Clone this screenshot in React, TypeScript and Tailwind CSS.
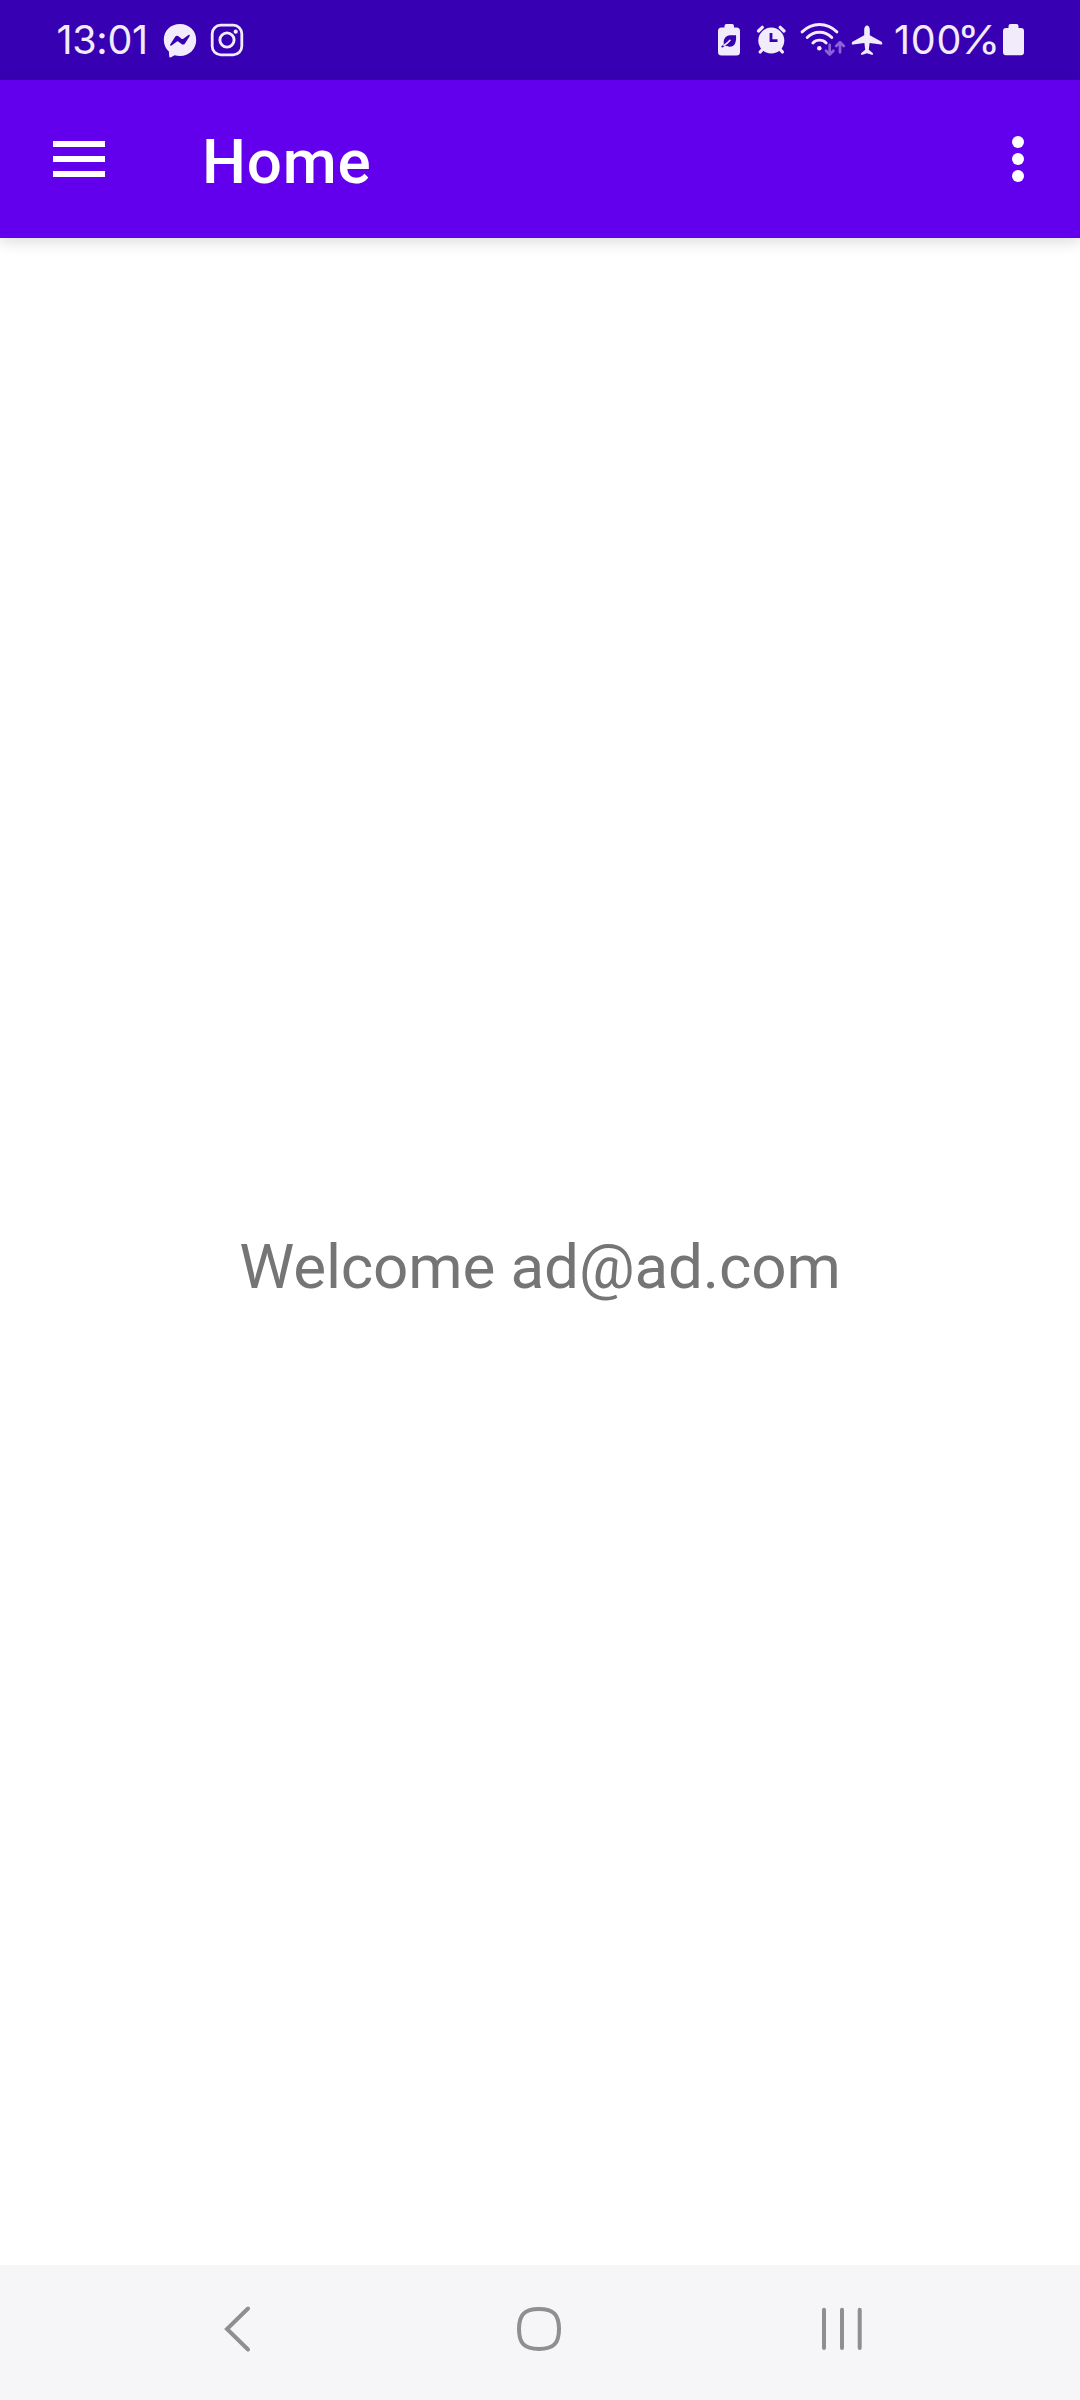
const INK = "#f1ebfc";

function MessengerIcon() {
  return (
    <svg className="h-[36px] w-[34px]" viewBox="0 0 34 36" fill="none">
      <path
        d="M17 1C7.600 1 .8 7.700 .8 16.700C.8 21.500 2.700 25.800 5.900 28.600L6.200 33.400C6.300 34.300 7.200 34.700 8 34.300L11.600 32.200C13.300 32.700 15.100 32.900 17 32.900C26.300 32.900 33.200 26 33.200 16.900C33.200 7.800 26.300 1 17 1Z"
        fill={INK}
      />
      <path
        d="M7.200 21.600L12 13.900Q13.500 11.900 15.500 13.300L18.800 15.900Q19.400 16.300 20 15.900L25.400 12.100Q27.300 11.200 26.600 13.200L22 20.400Q20.500 22.400 18.500 21L15.200 18.500Q14.600 18.100 14 18.500L8.500 22.400Q6.700 23.200 7.200 21.600Z"
        fill="#3700b3"
      />
    </svg>
  );
}

function InstagramIcon() {
  return (
    <svg className="h-[34px] w-[34px]" viewBox="0 0 34 34" fill="none" stroke={INK}>
      <rect x="2.200" y="2.200" width="29.600" height="29.600" rx="8.500" strokeWidth="2.800" />
      <circle cx="17" cy="17" r="7.100" strokeWidth="2.900" />
      <circle cx="25.700" cy="8.700" r="2.100" fill={INK} stroke="none" />
    </svg>
  );
}

function LeafBatteryIcon() {
  return (
    <svg className="h-8 w-[22px]" viewBox="0 0 22 32" fill="none">
      <path
        d="M8.500 0H14Q16 0 16 2V3.500H18.500Q22 3.500 22 7V28Q22 31.500 18.500 31.500H3.500Q0 31.500 0 28V7Q0 3.500 3.500 3.500H6.500V2Q6.500 0 8.500 0Z"
        fill={INK}
      />
      <path
        d="M18 11.300C18.600 18 17 22.800 11.500 22.800C10 22.800 8.500 22.400 7.600 21.600L4 23.800L3.200 22.400L5.900 20.300C5 15 8 11.300 12 11.300Z"
        fill="#3700b3"
      />
      <path d="M6 21.400Q9.500 19.300 12 16.300" stroke={INK} strokeWidth="1.600" strokeLinecap="round" />
    </svg>
  );
}

function AlarmIcon() {
  return (
    <svg className="h-[30px] w-[30px]" viewBox="0 0 30 30" fill="none" stroke={INK} strokeLinecap="round">
      <circle cx="15.300" cy="15.600" r="13" fill={INK} stroke="none" />
      <path d="M2.500 6L6.300 2.300M24.200 2.300L28 6" strokeWidth="3.200" />
      <path d="M6.800 24L4.200 27M23.800 24L26.400 27" strokeWidth="3.200" />
      <path d="M15 8V15.600H21.500" stroke="#3700b3" strokeWidth="2.800" strokeLinecap="butt" />
    </svg>
  );
}

function WifiIcon() {
  return (
    <svg className="h-[34px] w-[46px]" viewBox="0 0 46 34" fill="none" strokeLinecap="round">
      <g stroke={INK} strokeWidth="2.900">
        <path d="M2.100 8.900Q9.800 1.500 19.500 1.500T36.900 8.900" />
        <path d="M7.200 14.500Q12.300 9.300 19.500 9.300T31.800 14.500" />
        <path d="M12.900 19.900Q15.500 17.100 19.500 17.100T26.200 19.900" />
      </g>
      <circle cx="19.300" cy="25.300" r="2.300" fill={INK} />
      <g stroke="#8b63d8" strokeWidth="2.700" strokeLinejoin="round">
        <path d="M29.700 21.800V31M26 27.800L29.700 31.600L33.400 27.800" />
        <path d="M40 29.300V19.800M36.200 23L40 19.200L43.800 23" />
      </g>
    </svg>
  );
}

function AirplaneIcon() {
  return (
    <svg className="h-[31px] w-8" viewBox="0 0 32 31" fill={INK}>
      <path d="M16 .5C14.400 .5 13.300 2.200 13.200 4.500V10.300L1.900 16.500Q.7 17.200 .7 18.400Q.7 19.700 2 19.600L13.400 18L14.200 24.800L10.300 27.900Q9.500 28.900 10 29.500Q10.400 29.900 11.400 29.700L16 28.300L20.600 29.700Q21.600 29.900 22 29.500Q22.500 28.900 21.700 27.900L17.800 24.800L18.600 18L30 19.600Q31.300 19.700 31.300 18.400Q31.300 17.200 30.100 16.500L18.800 10.300V4.500C18.700 2.200 17.600 .5 16 .5Z" />
    </svg>
  );
}

function BatteryIcon() {
  return (
    <svg className="h-8 w-[22px]" viewBox="0 0 22 32" fill={INK}>
      <path d="M7.500 0H13.500Q15.500 0 15.500 2V4H18Q21 4 21 7V28.300Q21 31.300 18 31.300H3Q0 31.300 0 28.300V7Q0 4 3 4H5.500V2Q5.500 0 7.500 0Z" />
    </svg>
  );
}

function StatusBar() {
  return (
    <header className="flex h-20 justify-between bg-[#3700b3] pr-[55px] pl-[56px] font-['Inter','Roboto',sans-serif] text-[39.500px] leading-[80px] text-[#f1ebfc]">
      <div className="flex items-start">
        <span className="w-[107px] pl-[0.500px] tracking-[-0.300px] whitespace-nowrap">13:01</span>
        <div className="mt-[23px]">
          <MessengerIcon />
        </div>
        <div className="mt-[23px] ml-[13px]">
          <InstagramIcon />
        </div>
      </div>
      <div className="flex items-start">
        <div className="mt-6">
          <LeafBatteryIcon />
        </div>
        <div className="mt-[25px] ml-[16px]">
          <AlarmIcon />
        </div>
        <div className="mt-[23px] ml-[14px]">
          <WifiIcon />
        </div>
        <div className="mt-[25px] ml-[5px]">
          <AirplaneIcon />
        </div>
        <span className="ml-[11px] w-[109px] tracking-[0.800px] whitespace-nowrap">
          100
          <span className="ml-[-5.500px] inline-block origin-left scale-x-[1.120]">%</span>
        </span>
        <div className="mt-6">
          <BatteryIcon />
        </div>
      </div>
    </header>
  );
}

function AppBar() {
  return (
    <div className="z-10 flex h-[158px] items-center bg-[#6200ee] px-[53px] text-white shadow-[0_4px_14px_rgba(0,0,0,0.14)]">
      <button aria-label="Open navigation" className="flex w-[52px] flex-col gap-[8.600px]">
        <span className="h-[6px] bg-white" />
        <span className="h-[6px] bg-white" />
        <span className="h-[6px] bg-white" />
      </button>
      <h1 className="ml-[97px] flex-1 pt-1.5 text-[62px] leading-[72px] font-medium tracking-[0.800px]">Home</h1>
      <button aria-label="More options" className="flex flex-col items-center gap-[5px] px-[3px]">
        <span className="size-3 rounded-full bg-white" />
        <span className="size-3 rounded-full bg-white" />
        <span className="size-3 rounded-full bg-white" />
      </button>
    </div>
  );
}

function NavigationBar() {
  return (
    <nav className="flex h-[135px] items-start bg-[#f6f6f8] pt-[40px] pl-[222px]">
      <svg className="h-12 w-[30px]" viewBox="0 0 30 48" fill="none" stroke="#8f8f8f" strokeWidth="4" strokeLinecap="round">
        <path d="M26 3.500L5 24L26 44.500" />
      </svg>
      <svg className="ml-[263px] h-12 w-12" viewBox="0 0 48 48" fill="none" stroke="#8f8f8f" strokeWidth="4">
        <path d="M24 4C38.500 4 44 9.500 44 24S38.500 44 24 44S4 38.500 4 24S9.500 4 24 4Z" />
      </svg>
      <svg className="ml-[257px] h-12 w-12" viewBox="0 0 48 48" fill="none" stroke="#8f8f8f" strokeWidth="4" strokeLinecap="round">
        <path d="M4 4.800V43M22 4.800V43M39.700 4.800V43" />
      </svg>
    </nav>
  );
}

export default function App() {
  return (
    <div className="flex h-[2400px] w-[1080px] flex-col overflow-hidden bg-white font-['Roboto',sans-serif]">
      <StatusBar />
      <AppBar />
      <main className="flex flex-1 items-center justify-center pt-[30px]">
        <p className="text-[62px] leading-[72px] tracking-[-0.150px] whitespace-nowrap text-[#757575]">Welcome ad@ad.com</p>
      </main>
      <NavigationBar />
    </div>
  );
}
